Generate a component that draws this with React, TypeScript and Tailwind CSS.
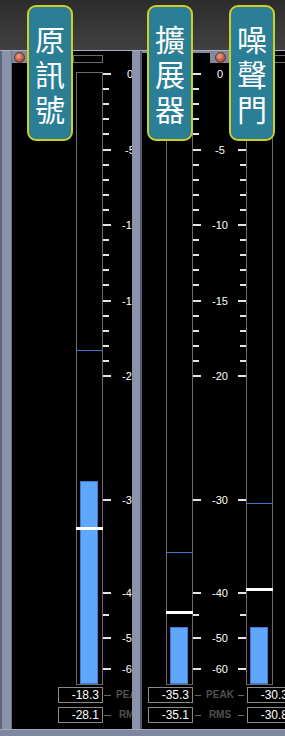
import React from "react";

type Tick = { db: number; major: boolean; label: boolean };

// dB -> page y, taken from the meter scale (not linear below -20)
const ANCHORS: [number, number][] = [
  [0, 74],
  [-20, 376],
  [-30, 500],
  [-40, 593],
  [-45, 615],
  [-50, 638],
  [-60, 669],
  [-70, 684],
];

function dbToY(db: number) {
  for (let i = 0; i < ANCHORS.length - 1; i++) {
    const [d0, y0] = ANCHORS[i];
    const [d1, y1] = ANCHORS[i + 1];
    if (db <= d0 && db >= d1) return y0 + ((d0 - db) / (d0 - d1)) * (y1 - y0);
  }
  return 684;
}

const ROW_TOP = 63; // page y where the meter rows begin
const TUBE_INNER = 73;

const TICKS: Tick[] = [
  ...Array.from({ length: 21 }, (_, i) => ({ db: -i, major: i % 5 === 0, label: i % 5 === 0 })),
  { db: -30, major: true, label: true },
  { db: -40, major: true, label: true },
  { db: -45, major: false, label: false },
  { db: -50, major: true, label: true },
  { db: -60, major: true, label: true },
];

function Tube({ peak, hold, level }: { peak: number; hold: number; level: number }) {
  return (
    <div className="relative mt-[9px] h-[613px] w-[27px] shrink-0 border border-[#6c6c6c]">
      <div
        className="absolute bottom-0 left-[3px] w-[18px] border border-[#3b7bd2] bg-[#5fa7fc]"
        style={{ height: 684 - Math.round(dbToY(level)) }}
      />
      <div
        className="absolute -left-px -right-px h-px bg-[#4c72c8]"
        style={{ top: Math.round(dbToY(peak)) - TUBE_INNER }}
      />
      <div
        className="absolute -left-px -right-px h-[3px] bg-white"
        style={{ top: Math.round(dbToY(hold)) - TUBE_INNER }}
      />
    </div>
  );
}

function Ticks({ align, width }: { align: "start" | "end"; width: "w-[9px]" | "w-[8px]" }) {
  return (
    <div className={`relative shrink-0 ${width}`}>
      {TICKS.map((t) => (
        <div
          key={t.db}
          className={`absolute h-[2px] bg-[#e4e4e4] ${t.major ? "w-[8px]" : "w-[6px]"} ${
            align === "start" ? "left-0" : "right-0"
          }`}
          style={{ top: Math.round(dbToY(t.db)) - ROW_TOP - 1 }}
        />
      ))}
    </div>
  );
}

function Scale() {
  return (
    <div className="relative w-[36px] shrink-0">
      {TICKS.filter((t) => t.label).map((t) => (
        <div
          key={t.db}
          className="absolute inset-x-0 text-center text-[11px] leading-[12px] text-white"
          style={{ top: Math.round(dbToY(t.db)) - ROW_TOP - 6 }}
        >
          {t.db}
        </div>
      ))}
    </div>
  );
}

function Readout({ value }: { value: string }) {
  return (
    <div className="h-[16px] w-[45px] shrink-0 border border-[#8a8a8a] bg-black pr-[3px] text-right text-[12px] leading-[14px] text-white">
      {value}
    </div>
  );
}

function Dash({ className }: { className: string }) {
  return (
    <div className="flex w-[9px] shrink-0 items-center">
      <div className={`h-px bg-[#6a6a6a] ${className}`} />
    </div>
  );
}

function Tag({ text }: { text: string }) {
  return (
    <div className="w-[36px] shrink-0 text-center text-[10px] font-bold leading-[16px] text-[#505050]">
      {text}
    </div>
  );
}

function Knob() {
  return (
    <div className="h-[11px] w-[11px] rounded-full border border-[#5b342a] bg-[radial-gradient(circle_at_40%_35%,#eba488,#b8583e_60%,#8a3f2c)]" />
  );
}

function VLabel({ text, left }: { text: string; left: string }) {
  return (
    <div
      className={`absolute top-[5px] ${left} flex h-[136px] w-[46px] flex-col items-center justify-center rounded-[9px] border-2 border-[#cfcf1f] bg-[#2a7e96] font-['Noto_Sans_CJK_TC',sans-serif] text-[30px] leading-[35px] text-white`}
    >
      {text.split("").map((c) => (
        <span key={c}>{c}</span>
      ))}
    </div>
  );
}

export default function App() {
  return (
    <div className="relative h-[736px] w-[285px] overflow-hidden bg-[#8189a2] font-['Liberation_Sans',Arial,sans-serif]">
      <div className="h-[50px] bg-linear-to-b from-[#2c2c2c] to-[#414141]" />

      <div className="flex h-[679px] border-t border-[#a7aec3]">
        {/* left frame */}
        <div className="w-[12px] shrink-0 border-l-2 border-r border-l-[#5e667d] border-r-[#6b7389] bg-[#8b93ac]" />

        {/* 原訊號 */}
        <div className="flex w-[120px] shrink-0 flex-col overflow-hidden">
          <div className="flex h-[12px] shrink-0">
            <div className="flex w-[15px] items-center justify-center">
              <Knob />
            </div>
            <div className="flex flex-1 flex-col">
              <div className="h-[2px]" />
              <div className="flex-1 bg-black">
                <div className="ml-[46px] mt-[4px] h-[8px] w-[30px] border border-[#6c6c6c]" />
              </div>
            </div>
          </div>
          <div className="flex flex-1 flex-col bg-black">
            <div className="flex h-[622px] pl-[64px]">
              <Tube peak={-18.3} hold={-32.9} level={-28.5} />
              <Ticks align="start" width="w-[9px]" />
              <Scale />
            </div>
            <div className="mt-[2px] flex pl-[46px]">
              <Readout value="-18.3" />
              <Dash className="ml-[1px] w-[7px]" />
              <Tag text="PEAK" />
            </div>
            <div className="mt-[4px] flex pl-[46px]">
              <Readout value="-28.1" />
              <Dash className="ml-[1px] w-[7px]" />
              <Tag text="RMS" />
            </div>
          </div>
        </div>

        {/* divider */}
        <div className="w-[10px] shrink-0 border-r-2 border-[#525a70] bg-[#8b93ac]" />

        {/* 擴展器 / 噪聲門 */}
        <div className="flex w-[170px] shrink-0 flex-col">
          <div className="flex h-[12px] shrink-0">
            <div className="flex w-[68px] flex-col">
              <div className="h-[2px]" />
              <div className="flex-1 bg-black" />
            </div>
            <div className="flex w-[20px] items-center justify-center">
              <Knob />
            </div>
            <div className="flex flex-1 flex-col">
              <div className="h-[2px]" />
              <div className="flex-1 bg-black">
                <div className="ml-[13px] mt-[4px] h-[8px] w-[60px] border border-[#6c6c6c]" />
              </div>
            </div>
          </div>
          <div className="flex flex-1 flex-col bg-black">
            <div className="flex h-[622px] pl-[24px]">
              <Tube peak={-35.6} hold={-44.1} level={-47.6} />
              <Ticks align="start" width="w-[9px]" />
              <Scale />
              <Ticks align="end" width="w-[8px]" />
              <Tube peak={-30.3} hold={-39.5} level={-47.6} />
            </div>
            <div className="mt-[2px] flex pl-[6px]">
              <Readout value="-35.3" />
              <Dash className="ml-[2px] w-[6px]" />
              <Tag text="PEAK" />
              <Dash className="w-[6px]" />
              <Readout value="-30.3" />
            </div>
            <div className="mt-[4px] flex pl-[6px]">
              <Readout value="-35.1" />
              <Dash className="ml-[2px] w-[6px]" />
              <Tag text="RMS" />
              <Dash className="w-[6px]" />
              <Readout value="-30.8" />
            </div>
          </div>
        </div>
      </div>

      {/* bottom frame */}
      <div className="h-[7px] border-t border-[#a3aac0] bg-[#7f87a0]" />

      <VLabel text="原訊號" left="left-[27px]" />
      <VLabel text="擴展器" left="left-[147px]" />
      <VLabel text="噪聲門" left="left-[229px]" />
    </div>
  );
}
